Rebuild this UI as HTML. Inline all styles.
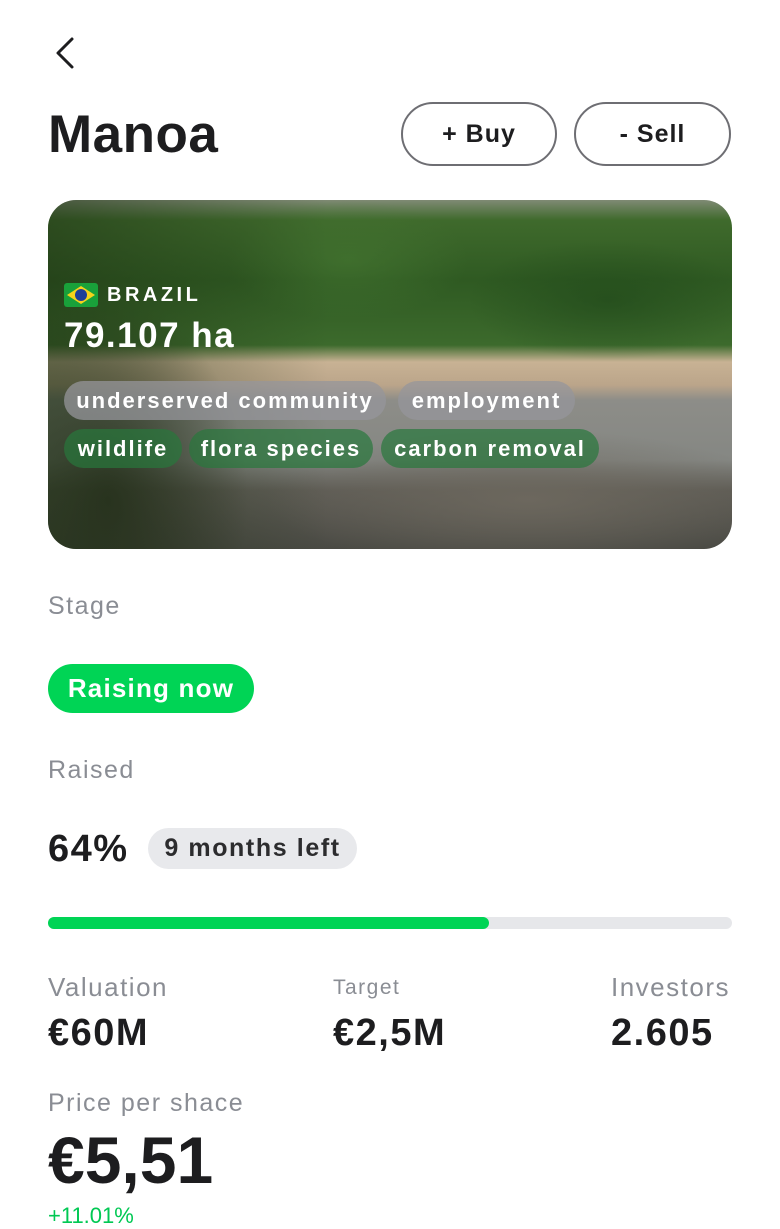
<!DOCTYPE html>
<html><head><meta charset="utf-8"><style>
*{margin:0;padding:0;box-sizing:border-box}
body{width:780px;height:1229px;background:#fff;font-family:"Liberation Sans",sans-serif;position:relative;overflow:hidden;color:#1d1d1f}
.a{position:absolute;white-space:nowrap}
.btn{position:absolute;top:102px;height:64px;border:2px solid #6e6e73;border-radius:32px;font-weight:bold;font-size:25px;display:flex;align-items:center;justify-content:center;letter-spacing:1px;color:#1d1d1f}
.card{position:absolute;left:48px;top:200px;width:684px;height:349px;border-radius:28px;overflow:hidden;
background:
radial-gradient(ellipse 140px 200px at 60px 300px,rgba(40,45,30,.85),transparent),
radial-gradient(ellipse 260px 70px at 480px 300px,rgba(110,105,95,.9),transparent),
radial-gradient(ellipse 120px 60px at 300px 60px,rgba(70,120,50,.6),transparent),
radial-gradient(ellipse 140px 60px at 560px 100px,rgba(30,70,25,.6),transparent),
linear-gradient(180deg,#7f8a74 0px,#3f6a2c 20px,#2f5a22 80px,#3c6a2c 145px,#c8b294 162px,#bba58a 185px,#8d8d88 200px,#858783 260px,#5e5c55 290px,#4a4a44 349px)}
.lbl{color:#8a8d94;font-size:25px;letter-spacing:1.5px}
.chip{position:absolute;height:39px;border-radius:20px;color:#fff;font-weight:bold;font-size:22px;letter-spacing:2px;display:flex;align-items:center;justify-content:center}
.g{background:rgba(150,150,155,.75)}
.gr{background:rgba(40,120,60,.7)}
.v{font-weight:bold;font-size:38px;color:#1d1d1f;letter-spacing:1.5px}
</style></head><body>
<svg class="a" style="left:52px;top:36px" width="26" height="36" viewBox="0 0 26 36"><path d="M20 3 L6 17 L20 31" fill="none" stroke="#1d1d1f" stroke-width="3" stroke-linecap="round" stroke-linejoin="round"/></svg>
<div class="a" style="left:48px;top:104px;font-size:53px;font-weight:bold;line-height:62px;letter-spacing:.5px">Manoa</div>
<div class="btn" style="left:401px;width:156px">+ Buy</div>
<div class="btn" style="left:574px;width:157px">- Sell</div>
<div class="card">
<div class="a" style="left:0;top:0;width:280px;height:349px;background:linear-gradient(90deg,rgba(30,50,20,.55),transparent)"></div>
<svg class="a" style="left:16px;top:83px" width="34" height="24" viewBox="0 0 34 24"><rect width="34" height="24" rx="3" fill="#19a13a"/><path d="M17 3 L31 12 L17 21 L3 12Z" fill="#f6d31b"/><circle cx="17" cy="12" r="6" fill="#1f3f99"/></svg>
<div class="a" style="left:59px;top:83px;color:#fff;font-weight:bold;font-size:20px;letter-spacing:3.5px;line-height:24px">BRAZIL</div>
<div class="a" style="left:16px;top:116px;color:#fff;font-weight:bold;font-size:35px;line-height:40px;letter-spacing:1.5px">79.107 ha</div>
<div class="chip g" style="left:16px;top:181px;width:322px">underserved community</div>
<div class="chip g" style="left:350px;top:181px;width:177px">employment</div>
<div class="chip gr" style="left:16px;top:229px;width:118px">wildlife</div>
<div class="chip gr" style="left:141px;top:229px;width:184px">flora species</div>
<div class="chip gr" style="left:333px;top:229px;width:218px">carbon removal</div>
</div>
<div class="a lbl" style="left:48px;top:592px">Stage</div>
<div class="a" style="left:48px;top:664px;width:206px;height:49px;border-radius:25px;background:#00d455;color:#fff;font-weight:bold;font-size:26px;letter-spacing:1.2px;display:flex;align-items:center;justify-content:center">Raising now</div>
<div class="a lbl" style="left:48px;top:756px">Raised</div>
<div class="a v" style="left:48px;top:828px;line-height:42px">64%</div>
<div class="a" style="left:148px;top:828px;width:209px;height:41px;border-radius:21px;background:#e8e9ec;font-weight:bold;font-size:25px;letter-spacing:1.6px;display:flex;align-items:center;justify-content:center;color:#2c2c2e">9 months left</div>
<div class="a" style="left:48px;top:917px;width:684px;height:12px;border-radius:6px;background:#e6e7ea"><div style="width:441px;height:12px;border-radius:6px;background:#00d455"></div></div>
<div class="a lbl" style="left:48px;top:972px;font-size:26px">Valuation</div>
<div class="a lbl" style="left:333px;top:976px;font-size:21px">Target</div>
<div class="a lbl" style="left:611px;top:972px;font-size:26px">Investors</div>
<div class="a v" style="left:48px;top:1012px">€60M</div>
<div class="a v" style="left:333px;top:1012px">€2,5M</div>
<div class="a v" style="left:611px;top:1012px">2.605</div>
<div class="a lbl" style="left:48px;top:1089px;font-size:25px">Price per shace</div>
<div class="a" style="left:48px;top:1122px;font-weight:bold;font-size:66px;line-height:76px">€5,51</div>
<div class="a" style="left:48px;top:1203px;color:#00c853;font-size:22px">+11.01%</div>
</body></html>
